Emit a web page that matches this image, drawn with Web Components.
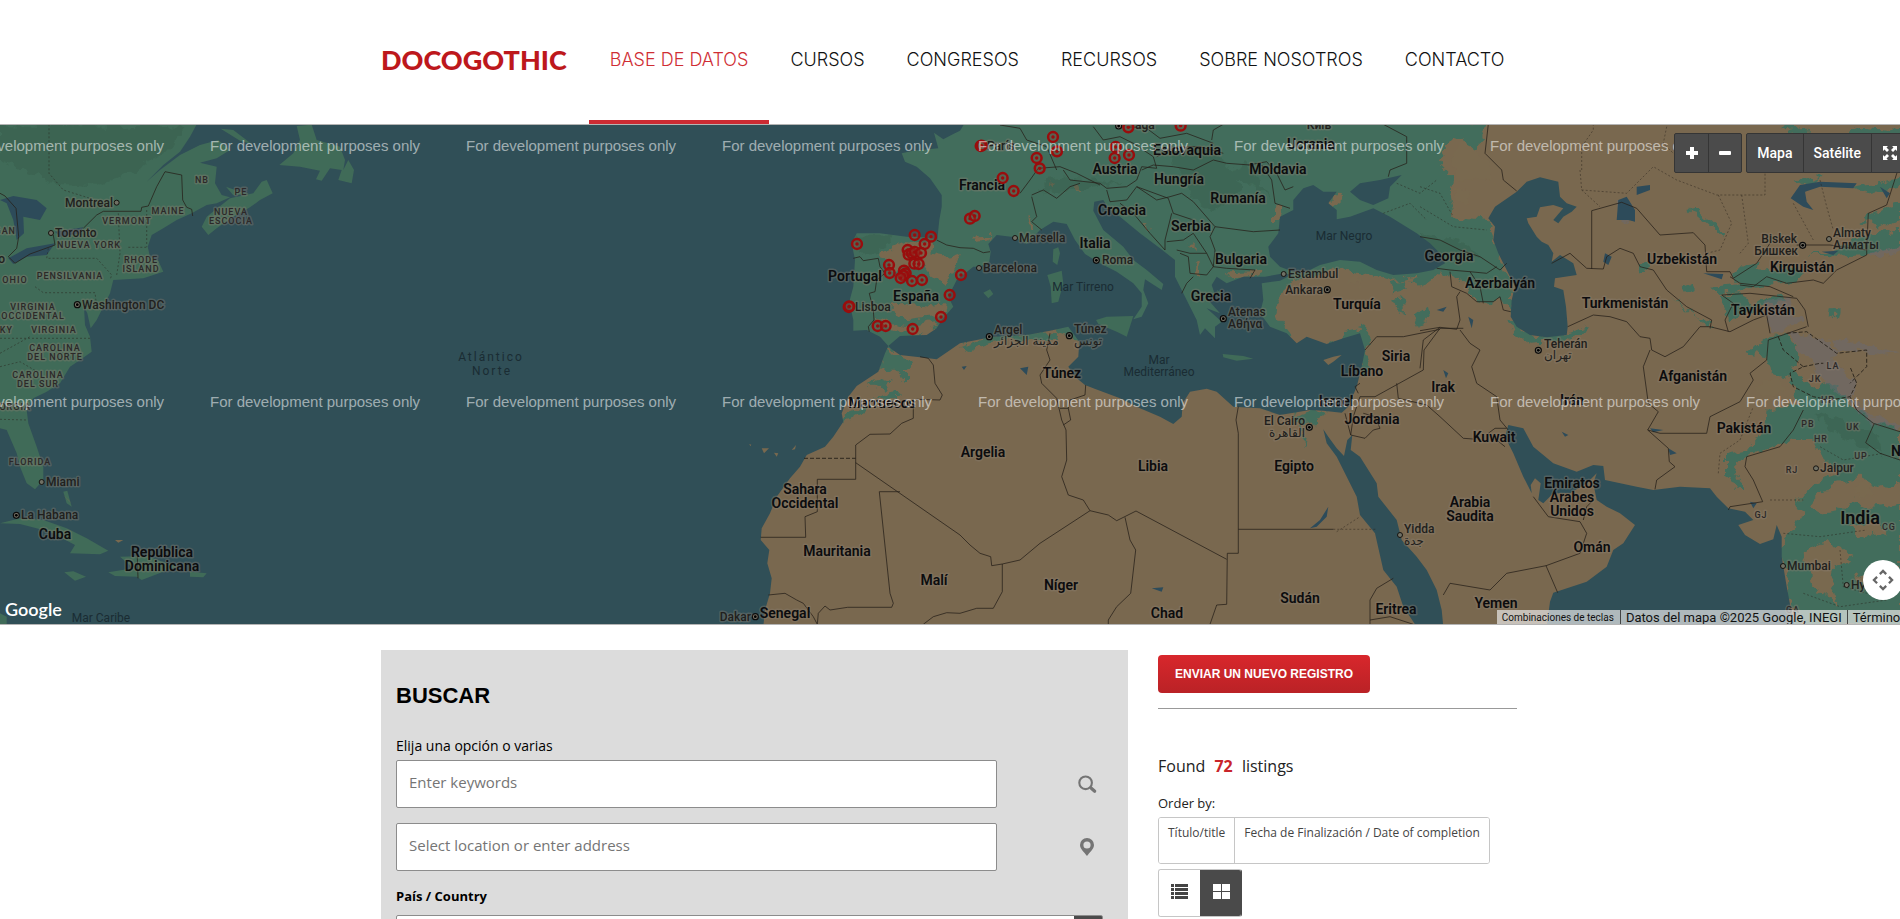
<!DOCTYPE html>
<html lang="es">
<head>
<meta charset="utf-8">
<title>Docogothic – Base de datos</title>
<style>
html, body { margin: 0; height: 100%; }
body { background: #fff; color: #222; font-family: "Open Sans", "Noto Sans", sans-serif; overflow: auto; scrollbar-width: none; }
dg-columns { margin-top: 25px; }
</style>
</head>
<body>
<dg-header>
  <dg-nav-item href="#datos" current>BASE DE DATOS</dg-nav-item>
  <dg-nav-item href="#cursos">CURSOS</dg-nav-item>
  <dg-nav-item href="#congresos">CONGRESOS</dg-nav-item>
  <dg-nav-item href="#recursos">RECURSOS</dg-nav-item>
  <dg-nav-item href="#nosotros">SOBRE NOSOTROS</dg-nav-item>
  <dg-nav-item href="#contacto">CONTACTO</dg-nav-item>
</dg-header>
<dg-map></dg-map>
<dg-columns>
  <dg-search slot="main"></dg-search>
  <dg-results slot="side"></dg-results>
</dg-columns>

<script>
const define = (name, html, setup) => {
  const template = document.createElement('template');
  template.innerHTML = html;
  customElements.define(name, class extends HTMLElement {
    constructor() {
      super();
      this.attachShadow({ mode: 'open' }).append(template.content.cloneNode(true));
    }
    connectedCallback() { if (setup) setup(this, this.shadowRoot); }
  });
};

define('dg-header', `
<style>
:host { display: block; background: #fff; }
.bar { display: flex; height: 124px; max-width: 1138px; margin: 0 auto; gap: 22px; }
.logo { display: flex; align-items: center; padding-bottom: 4px; color: #bd181c; font: 900 27px/32px Lato, sans-serif; text-decoration: none; }
nav { display: flex; }
</style>
<header class="bar"><a class="logo" href="#inicio">DOCOGOTHIC</a><nav><slot></slot></nav></header>`);

define('dg-nav-item', `
<style>
:host { display: flex; }
a { display: flex; align-items: center; padding: 0 21px; border-bottom: 4px solid transparent; color: #111; font: 300 18px/24px Inter, sans-serif; text-decoration: none; white-space: nowrap; }
:host([current]) a { color: #cf2e34; border-color: #cc2b33; }
</style>
<a><slot></slot></a>`, (el, root) => { root.querySelector('a').href = el.getAttribute('href'); });

define('dg-columns', `
<style>
:host { display: grid; grid-template-columns: minmax(0, 747fr) minmax(0, 359fr); gap: 30px; box-sizing: border-box; max-width: 1138px; padding-right: 2px; margin: 0 auto; }
</style>
<slot name="main"></slot><slot name="side"></slot>`);

define('dg-search', `
<style>
:host { display: block; background: #dcdcdc; padding: 31px 25px 30px 15px; color: #000; }
h2 { margin: 0 0 25px; font: 700 22px/30px "Liberation Sans", sans-serif; }
label { display: block; font-size: 14px; line-height: 20px; margin-bottom: 4px; }
label.strong { font-size: 13px; font-weight: 700; margin-bottom: 9px; }
.row { display: flex; justify-content: space-between; align-items: center; margin-bottom: 15px; }
input { box-sizing: border-box; width: 85%; height: 48px; padding: 0 12px 4px; border: 1px solid #8c8c8c; border-radius: 2px; background: #fff; font: 15px "Open Sans", sans-serif; }
input::placeholder { color: #757575; opacity: 1; }
.icon { width: 32px; height: 32px; padding: 0; border: 0; background: none; color: #757575; display: grid; place-items: center; }
.pick { display: flex; position: relative; }
select { appearance: none; width: 100%; height: 48px; padding: 0 40px 0 12px; border: 1px solid #8c8c8c; border-radius: 2px; background: linear-gradient(#4b4b4b, #4b4b4b) right / 28px 100% no-repeat #fff; font: 15px "Open Sans", sans-serif; }
</style>
<form>
  <h2>BUSCAR</h2>
  <label for="kw">Elija una opción o varias</label>
  <div class="row"><input id="kw" type="text" placeholder="Enter keywords">
    <button class="icon" type="button" aria-label="Buscar"><svg width="20" height="20" viewBox="0 0 20 20" fill="none" stroke="currentColor"><circle cx="8.600" cy="8.800" r="6.300" stroke-width="2.100"/><path d="M13.300 13.300l1 1" stroke-width="2"/><path d="M14.300 14.200l3.400 3" stroke-width="3.200" stroke-linecap="round"/></svg></button></div>
  <div class="row"><input id="loc" type="text" aria-label="Dirección" placeholder="Select location or enter address">
    <button class="icon" type="button" aria-label="Ubicación"><svg width="20" height="20" viewBox="0 0 20 20"><path fill="currentColor" fill-rule="evenodd" d="M10 1a7 7 0 0 0-7 7c0 4 4.500 7.500 7 11 2.500-3.500 7-7 7-11a7 7 0 0 0-7-7zm0 3.400a3.600 3.600 0 1 1 0 7.200 3.600 3.600 0 0 1 0-7.200z"/></svg></button></div>
  <label class="strong" for="country">País / Country</label>
  <div class="pick"><select id="country"><option></option></select></div>
</form>`);

define('dg-results', `
<style>
:host { display: block; padding-top: 5px; color: #222; }
.send { display: block; height: 38px; padding: 0 17px; border: 0; border-radius: 4px; background: linear-gradient(#d8272c, #ba2226); color: #fff; font: 700 12px "Liberation Sans", sans-serif; }
hr { border: 0; border-top: 1px solid #999; margin: 15px 0 45px; }
p { margin: 0; }
.found { font-size: 16px; line-height: 24px; margin-bottom: 15px; }
.found b { color: #c9252b; margin: 0 5px; }
.order { font-size: 13px; line-height: 20px; margin-bottom: 4px; }
.group { display: flex; width: max-content; margin-bottom: 5px; border: 1px solid #c6c6c6; border-radius: 3px; overflow: hidden; }
.group button { margin: 0; border: 0; background: #fff; color: #444; font: 12px/20px "Open Sans", sans-serif; height: 45px; padding: 5px 9px 20px; white-space: nowrap; }
.group button + button { border-left: 1px solid #c6c6c6; }
.views button { width: 41px; height: 46px; padding: 0 0 4px; display: grid; place-items: center; }
.views button + button { background: #4a4a4a; color: #fff; border-color: #4a4a4a; }
.views { border-right-color: #4a4a4a; }
</style>
<button class="send" type="button">ENVIAR UN NUEVO REGISTRO</button>
<hr>
<p class="found">Found <b>72</b> listings</p>
<p class="order">Order by:</p>
<div class="group"><button type="button">Título/title</button><button type="button">Fecha de Finalización / Date of completion</button></div>
<div class="group views">
  <button type="button" aria-label="Lista"><svg width="17" height="16" fill="currentColor"><path d="M0 1h3v3H0zM0 5h3v3H0zM0 9h3v3H0zM0 13h3v3H0zM4 1h13v3H4zM4 5h13v3H4zM4 9h13v3H4zM4 13h13v3H4z"/></svg></button>
  <button type="button" aria-label="Cuadrícula"><svg width="17" height="16" fill="currentColor"><path d="M0 1h8v7H0zM9 1h8v7H9zM0 9h8v7H0zM9 9h8v7H9z"/></svg></button>
</div>`);

/* ---- Map: survey sheets A–D, each a third of a pixel per unit, side by side ---- */
const SHEET = { A: 0, B: 480, C: 960, D: 1420 };
const place = (s, x, y) => [SHEET[s] + x / 3, 120 + y / 3];
function trace(text, close) {
  return text.split('|').map(part => {
    let sheet = 'A', first = true, d = '';
    for (const token of part.trim().split(/\s+/)) {
      if (SHEET[token] !== undefined) { sheet = token; continue; }
      const [x, y] = token.split(',').map(Number);
      const [px, py] = place(sheet, x, y);
      d += (first ? 'M' : 'L') + px.toFixed(1) + ' ' + py.toFixed(1);
      first = false;
    }
    return d + (close ? 'Z' : '');
  }).join('');
}
const GREEN = `B 1150,0 C 1440,0 D 205,10 190,60 150,100 120,50 90,60 60,130 100,170 90,230 100,290 205,300 215,340 235,400 270,480 275,575 240,530 200,555 170,550 150,500 100,470 60,460 20,490 0,500 C 1370,470 1300,480 1230,460 1180,455 1130,440 1060,470 1000,480 970,520 945,560 960,600 1000,650 940,700 500,720 300,635 B 1440,580 1240,690 1080,640 1080,300
| B 1215,685 1250,705 1290,720 1296,740 1260,745 1290,760 1290,785 1260,770 1240,750 1210,745 1180,760 1150,790 1200,740
| B 1160,800 1200,775 1235,790 1215,810 1185,800 | B 1095,885 1150,865 1160,875 1110,900 1085,905 | B 1190,830 1240,820 1265,835 1210,840
| C 0,680 60,655 200,635 300,640 290,660 200,660 100,665 30,690
| C 1100,675 1150,640 1215,625 1230,640 1215,690 1230,740 1205,770 1190,690
| C 1290,490 1330,480 1340,510 1300,520 | C 1300,540 1330,535 1335,580 1310,570 | C 1350,480 1400,475 1390,500 | C 1360,590 1400,560 1410,600 1370,620
| C 1000,885 1060,865 1095,885 1060,905 1030,915 1040,960 1030,990 1032,940
| D 262,590 300,630 350,655 440,640 500,615 480,645 430,662 330,668 280,640
| D 1180,860 1240,800 1300,860 1370,910 1440,930 1440,1090 1390,1110 1320,1070 1230,1090 1180,1150 1190,1180 1260,1170 1300,1140 1350,1160 1440,1150 1440,1513 1125,1513 1085,1300 1095,1250 1130,1210 1150,1180 1130,1150 1160,1110 1200,1080 1260,1060 1200,1000 1180,960 1120,960 1000,1000 950,1030 945,1055 975,1110 950,1110 915,1060 915,1000 1000,980 1030,930 1040,870 1100,860
| D 985,700 1040,650 1090,640 1140,690 1120,750 1180,800 1240,790 1290,850 1240,900 1140,870 1110,770 1050,760 1040,710
| D 900,525 950,520 1010,550 1060,520 1100,540 1000,570 930,600 | D 940,470 980,430 1020,420 1010,450 1130,440 1150,470 1080,490 1010,500 960,495
| D 1160,400 1250,390 1320,350 1440,330 1440,380 1340,405 1250,410 | D 1330,300 1400,260 1440,250 1440,300 1380,330 | D 1290,200 1370,190 1440,170 1440,200 1350,220 
| D 870,500 960,490 990,500 940,520 880,515 | D 800,270 830,265 870,300 920,345 905,350 850,300 815,285 | D 760,530 830,590 880,605 860,615 790,560 | D 785,500 810,490 820,510 795,520 | D 1235,565 1250,565 1245,600 1232,590
| D 650,430 690,430 680,450 660,450 | D 1080,20 1150,15 1180,50 1120,50 | D 1240,60 1330,20 1440,30 1440,90 1380,60 1300,75 | D 1120,190 1200,170 1160,210`;
const TAN = `B 1200,400 1280,360 1360,370 1350,400 1400,410 1420,440 1390,490 1360,480 1330,440 1250,450 1220,430 | B 1220,560 1300,550 1410,560 1370,590 1290,600 1230,580 | B 1190,590 1290,620 1380,600 1350,640 1280,640 1200,615 | B 1250,400 1330,390 1310,440 | B 1380,420 1440,400 1420,460 1390,495
| C 40,350 95,345 85,362 50,365 | C 330,205 350,190 370,215 345,215 | C 205,290 225,320 210,320 | C 945,265 970,260 965,300 945,300 | C 260,195 285,190 280,205 | C 550,310 575,325 560,325 | C 680,375 710,370 710,390 | C 705,430 715,430 720,470 708,465 | C 1105,250 1140,220 1150,235 1120,262 | C 800,460 920,455 900,470 810,475 | C 1180,460 1200,480 1190,500 1165,490
| D 90,100 130,60 170,90 210,140 220,190 190,170 150,190 110,170 | D 100,200 150,210 140,260 110,240 | D 1300,1100 1350,1090 1360,1120 1310,1130 | D 1150,1290 1220,1270 1300,1310 1240,1340 1230,1400 1260,1450 1190,1420 1170,1350 | D 1280,1220 1370,1200 1400,1240 1320,1250 | D 1300,1370 1400,1340 1440,1400 1350,1400
| D 1000,800 1080,770 1100,820 1040,830`;
const SEA = `A 0,0 B 1460,0 1440,32 1420,42 1390,58 1362,38 1375,85 1300,92 1265,100 1275,125 1310,140 1350,175 1385,225 1385,260 1378,300 1372,358 1335,352 1280,350 1200,340 1130,340 1115,370 1125,420 1120,500 1108,545 1120,600 1120,632 1160,630 1200,650 1225,678 1215,700 1195,755 1130,798 1105,830 1085,880 1090,905 1060,950 1035,980 980,1005 960,1040 930,1075 890,1130 870,1180 845,1225 842,1260 868,1290 862,1330 875,1375 870,1420 855,1470 850,1520 A 0,1520
| B 1225,678 1260,648 1340,645 1370,625 1385,600 1420,560 1405,530 1430,480 1480,440 C 60,440 88,425 92,395 85,372 110,345 165,352 200,372 240,330 280,305 320,312 345,360 375,402 420,430 470,455 520,490 545,520 545,560 520,598 545,590 565,550 550,510 555,478 605,510 610,492 560,450 520,420 490,380 430,330 400,272 403,245 430,240 445,265 480,290 540,340 600,385 645,420 645,470 670,520 690,560 710,600 720,645 735,625 765,655 765,620 785,605 740,565 780,580 745,540 765,525 755,495 770,470 800,490 850,470 915,470 960,462 1000,462 960,482 905,490 910,540 900,580 930,620 980,640 1010,670 1040,650 1100,672 1150,655 1200,640 1215,690 1205,740 1190,800 1165,860 1145,878 1090,872 1050,870 960,885 900,865 820,860 770,815 740,806 690,815 668,850 665,890 640,912 600,890 540,865 480,835 400,805 375,795 345,770 325,740 355,710 358,665 325,620 270,632 200,645 100,650 0,670 B 1370,718 1320,712 1260,705 1235,688
| C 930,410 925,380 955,340 960,290 1000,270 1000,240 1030,205 1060,195 1090,215 1130,215 1105,250 1130,270 1130,298 1170,290 1240,265 1290,290 1370,340 1410,370 1440,400 1455,430 1420,450 1370,460 1300,465 1250,450 1200,425 1140,420 1080,435 1030,460 1000,455 960,440
| C 1170,215 1200,190 1260,180 1325,165 1290,200 1285,235 1240,255 1200,240
| D 205,295 225,260 290,215 320,185 360,172 415,185 420,230 440,250 470,260 455,275 430,290 415,310 400,300 430,265 400,255 360,262 350,290 320,295 325,310 350,350 365,365 385,375 400,400 395,425 420,405 460,430 470,465 405,475 402,500 430,510 438,560 443,620 440,645 380,652 330,645 290,620 272,590 275,540 285,500 260,450 235,400 220,360 225,320
| D 255,950 265,915 310,925 340,980 400,1030 470,1055 520,1035 550,1038 555,1080 650,1100 700,1110 780,1100 870,1105 890,1130 925,1165 975,1175 1000,1200 955,1215 975,1245 1020,1272 1060,1258 1070,1215 1085,1250 1085,1310 1100,1400 1115,1480 1125,1520 380,1520 390,1445 400,1418 500,1385 560,1340 580,1290 610,1270 645,1215 600,1180 560,1160 530,1140 520,1090 530,1060 500,1090 450,1120 400,1120 370,1150 355,1140 362,1090 345,1075 332,1095 335,1120 310,1070 280,1000
| C 1090,928 1105,950 1130,985 1152,1008 1162,960 1177,945 1172,990 1200,1010 1250,1090 1255,1130 1310,1200 1325,1260 1370,1310 1400,1350 1430,1410 1445,1470 1450,1520 1420,1520 1365,1513 1330,1460 1310,1400 1270,1350 1245,1240 1200,1185 1190,1130 1130,1010 1100,970`;
const LAKES = `A 0,240 40,228 110,240 140,265 120,300 70,290 72,340 50,360 40,300 20,250 | A 25,415 80,385 165,370 140,405 80,410 40,432 | A 165,335 250,322 240,340 180,350
| D 590,300 595,240 620,230 645,270 645,305 625,300 | D 650,200 690,195 690,210 650,225 | D 1112,235 1140,195 1200,185 1310,190 1300,205 1200,200 1155,215 1160,245 1180,270 1150,260 | D 850,460 910,462 905,478 | D 1380,200 1410,220 1400,235 | D 555,400 575,410 565,435 550,425 | D 50,570 80,560 70,575 | D 145,590 160,600 155,625 | D 1205,395 1255,392 1240,405 | D 690,925 730,930 700,937 | D 425,935 445,945 435,950 | D 745,985 770,1000 750,1005 | D 70,750 85,760 78,775 | D 990,1145 1010,1150 1000,1165
| C 1050,1225 1080,1200 1105,1160 1100,1190 1070,1220 | C 575,1405 610,1402 605,1415 | C 180,745 205,740 200,765 | C 5,740 20,738 12,750`;
const ISLANDS = `A 0,0 590,13 570,50 540,95 490,135 440,185 480,150 540,105 600,75 655,60 690,90 650,115 600,128 650,140 645,190 665,225 690,232 650,250 620,255 575,280 530,300 490,325 455,345 443,380 450,410 475,422 490,455 430,475 340,480 330,520 310,560 290,600 272,625 262,580 252,560 255,615 270,650 275,695 240,720 210,740 180,790 140,815 100,835 80,870 85,910 110,980 130,1040 130,1080 105,1108 80,1090 60,1040 50,1000 20,930 0,925
| A 605,320 620,290 690,235 760,220 785,185 800,180 818,220 780,240 750,262 700,290 650,325 625,345 | A 678,200 720,215 748,222 700,226 | A 838,135 880,100 900,60 890,18 935,14 950,60 1020,80 1035,120 1030,150 1045,120 1062,150 1055,190 1015,180 1025,150 990,145 965,182 948,178 960,152 900,140 | A 662,26 700,30 755,72 720,62
| A 0,1210 60,1195 130,1200 200,1225 260,1255 325,1292 300,1303 210,1300 225,1275 150,1235 60,1212 | A 325,1357 400,1345 360,1310 440,1308 530,1340 490,1355 425,1380 410,1370 345,1368 | A 570,1355 620,1360 610,1372 570,1370 | A 193,1357 220,1354 258,1370 225,1382 | A 190,1115 202,1112 215,1160 200,1150 | A 0,1480 20,1490 20,1513 0,1513
| C 280,388 295,382 300,400 292,435 278,425 | C 262,465 305,452 310,490 295,545 275,550 272,500 | C 408,600 440,590 520,588 500,650 470,635 415,612 | C 788,702 850,708 880,716 830,722 790,712 | C 70,518 90,508 100,522 85,535 | C 770,510 785,518 778,528`;
const SAND = `B 845,985 867,985 852,1000 | B 882,998 895,1000 890,1010 | B 935,990 948,975 945,988 | A 345,1260 370,1260 355,1268 | A 190,1125 214,1150 206,1140 | C 1090,720 1120,710 1145,705 1120,725 1105,735 | B 808,972 814,974 811,979`;
const SNOW = `D 600,250 612,235 622,300 605,308 | D 1040,540 1110,530 1120,580 1150,600 1060,640 1045,610 | D 1100,640 1170,640 1260,690 1240,720 1310,790 1290,850 1230,800 1180,740 | D 1290,830 1340,880 1440,920 1400,925 1320,890 | D 1340,400 1440,380 1440,395 1350,415 | D 1230,660 1300,670 1440,700 1380,705 1260,690`;
const SHADE = `A 0,13 560,20 480,110 300,200 160,190 0,120 | C 620,80 760,90 850,200 760,280 700,230 | B 1130,350 1240,350 1200,400 1130,400 | C 260,180 330,170 480,190 330,215 250,210 | C 700,180 860,130 930,240 860,180 | D 0,340 130,370 200,420 120,410 0,370 | D 1190,880 1360,930 1390,1000 1250,950`;
const BORDERS = `A 250,325 290,285 310,274 423,274 425,262 445,258 470,200 495,155 545,165 548,240 560,262 575,268 578,288 | A 0,220 15,228 48,265 56,350 50,385 25,410 45,430 90,402 165,375 160,345 | A 412,1310 414,1375
| B 1120,415 1140,410 1150,422 1195,415 1200,440 1215,460 1190,480 1185,515 1168,520 1180,570 1182,600 1165,620 1168,635 | B 1370,360 1400,375 1440,383 C 40,385 70,398 90,395
| B 1320,710 1345,715 1360,735 1365,790 1387,825 1380,840 1310,838 1300,855 1300,895 1265,910 1230,942 1170,943 1127,975 1127,1078 1012,1078 1012,1175 975,1190 977,1252 842,1252 | B 1127,1028 1440,1245 C 30,1275 60,1300 92,1310 95,1337 127,1332 180,1320 240,1270 390,1172 445,1185 470,1202 528,1173 800,1318 | B 1260,1115 1198,1115 1230,1420 1240,1450 1235,1462 1103,1462 1050,1470 1035,1458 1015,1480 1012,1513 | B 865,1425 915,1420 950,1440 970,1450 1000,1490 1012,1513 | B 1330,1513 1360,1490 1400,1478 1440,1480 C 50,1465 100,1465 127,1415 127,1332
| C 270,640 260,690 270,720 240,765 245,790 290,835 305,900 318,930 320,1020 305,1070 325,1125 370,1140 390,1172 | C 300,865 325,865 332,900 310,915 | C 377,795 375,825 330,840 325,865 | C 495,1192 510,1260 527,1290 512,1420 470,1460 445,1500 445,1513 | C 835,860 828,900 835,940 835,1300 802,1300 800,1453 770,1455 750,1513 | C 835,1228 1120,1228 | C 1155,880 1172,945 1180,890 1200,830 1245,830 1390,750 1392,690 1440,625 D 130,625 | C 1172,945 1215,955 1240,930 1260,925 1245,890 1210,880 | C 1195,820 1185,800 1200,790 | C 1310,790 1315,835 1400,855 1440,890 D 130,955 160,957 | C 1215,690 1250,650 1330,650 1440,628
| C 1230,1513 1230,1440 1250,1405 1300,1375 | C 1230,1500 1290,1490 1360,1513
| C 120,15 180,25 200,60 260,80 290,150 | C 180,220 210,180 235,145 300,140 350,160 420,195 | C 215,225 250,210 290,235 330,200 360,190 | C 215,230 230,290 215,305 245,330 | C 310,150 330,180 420,190 440,205 500,200 530,180 545,140 590,145 580,110 520,70 480,50 430,60 400,20 | C 545,150 580,135 640,140 700,150 760,120 800,130 870,135 | C 440,210 450,245 500,240 530,200 625,235 640,280 700,300 | C 480,250 520,280 570,340 615,390 615,360 635,280 | C 530,200 590,240 630,230 665,220 700,245 765,320 880,335 960,330 | C 765,320 750,350 765,390 760,440 800,445 885,450 870,475 | C 650,390 690,400 740,400 760,440 740,465 690,460 685,410 660,400 | C 620,365 670,360 700,340 740,400 | C 665,520 680,490 700,470 | C 865,135 920,125 950,160 975,210 1000,200 | C 905,135 935,180 945,250 990,265 | C 500,20 560,25 600,55 680,40 760,70 | C 755,60 760,30 790,13 | C 590,110 650,80 720,80 790,100 | C 1270,13 1340,50 1340,130 1290,150 1285,170
| D 205,13 195,100 245,150 250,180 290,213 | D 0,350 60,360 120,390 180,410 240,450 260,430 | D 50,445 90,450 150,455 200,460 230,440 | D 90,455 95,500 140,520 170,545 220,545 240,530 250,570 272,575 | D 150,455 180,500 190,550 | D 0,632 60,622 110,628 120,600 110,530 120,515 | D 120,630 150,670 180,690 155,740 170,790 230,830 240,900 265,930 | D 60,622 10,660 0,745 | D 205,940 225,925 260,925 | D 230,960 255,980
| D 515,447 515,272 605,247 650,265 720,345 820,338 855,375 860,455 930,455 940,475 1010,430 1050,370 | D 395,430 450,400 500,445 550,447 560,410 600,385 640,400 660,440 700,450 740,510 800,560 875,600 870,625 | D 443,620 520,585 570,590 620,605 660,650 690,655 695,690 735,710 790,680 840,620 870,620 930,635 1000,600 1040,585 1050,640 | D 690,690 670,740 685,850 715,875 683,930 745,985 748,1025 765,1040 710,1080 705,1108 | D 683,930 720,940 860,940 870,890 960,845 1000,780 990,760 1040,720 1045,660 1160,620 | D 905,525 990,520 1130,535 1155,570 1165,620 | D 905,525 940,550 915,600 925,635 | D 930,470 960,490 1050,500 1120,530 | D 960,495 1000,500 1040,470 1100,490 1180,480 1210,490 1250,450 1340,405 1340,375 | D 1130,375 1230,375 1340,390 1345,280 1400,255 1440,130 | D 1150,870 1120,930 1080,980 980,1010 975,1040 1000,1080 1028,1145 930,1160 925,1170 | D 1290,830 1310,870 1360,910 1440,935 | D 1362,912 1337,968 1380,1000 1440,1020 | D 385,1190 480,1205 500,1240 480,1300 378,1337 413,1418 | D 378,1337 260,1360 210,1410 90,1390 70,1425 | D 340,1130 385,1190 | D 490,1200 500,1160 520,1140`;
const DOTTED = `A 147,13 147,160 190,210 270,235 | A 145,385 140,415 290,415 335,465 330,480 | A 105,500 130,518 285,518 290,560 | A 355,280 360,400 350,465 | A 385,382 445,382 | A 440,270 440,380 | A 0,655 270,655 | A 0,700 90,650 | A 0,740 60,725 120,760 | A 0,898 80,900 | C 1120,1228 1250,1228 | C 1130,1235 1200,1190 | D 485,150 485,80 520,30 520,13 | D 480,150 485,210 540,260 | D 485,210 620,220 700,140 770,180 890,225 1035,225 1035,150 | D 740,20 730,70 800,140 | D 895,225 935,310 900,390 860,400 | D 965,225 985,370 960,400 | D 1120,250 1180,360 | D 1200,180 1220,260 1240,330 | D 960,960 1000,860 | D 895,1060 900,1000 960,960 | D 1050,1140 1150,1140 | D 1090,1240 1200,1250 1340,1230 | D 1200,980 1270,1020 1390,1000 | D 1260,1290 1270,1400 1340,1420 | D 1150,1420 1260,1460 1400,1440 | C 1270,280 1350,250 1400,300 | C 1310,190 1380,220 1430,180 | D 0,200 60,220 100,290 | D 0,260 100,320 200,330`;
const DASHED = `B 972,1015 1127,1015 | D 1075,650 1090,690 1150,740 1110,760 1120,800 1180,830 1230,840 1290,830 1310,790 1290,740 | D 1100,640 1160,635 1250,700 1340,690 1340,740 1290,790 | D 1150,740 1200,730 1210,730`;

/* sheet, x, baseline, text, kind, anchor (middle by default, s: start, e: end) */
const LABELS = [
['A',605,190,'NB','st'],['A',724,226,'PE','st'],['A',504,283,'MAINE','st'],['A',380,312,'VERMONT','st'],['A',694,285,'NUEVA','st'],['A',694,312,'ESCOCIA','st'],['A',48,343,'MICHIGAN','st','e'],['A',268,384,'NUEVA YORK','st'],['A',422,430,'RHODE','st'],['A',422,457,'ISLAND','st'],['A',210,478,'PENSILVANIA','st'],['A',45,490,'OHIO','st'],['A',98,571,'VIRGINIA','st'],['A',100,598,'OCCIDENTAL','st'],['A',40,640,'KENTUCKY','st','e'],['A',162,640,'VIRGINIA','st'],['A',166,694,'CAROLINA','st'],['A',166,721,'DEL NORTE','st'],['A',114,775,'CAROLINA','st'],['A',114,802,'DEL SUR','st'],['A',93,870,'GEORGIA','st','e'],['A',89,1036,'FLORIDA','st'],
['A',340,262,'Montreal','ci','e'],['A',166,352,'Toronto','ci','s'],['A',14,430,'Chicago','ci','e'],['A',247,567,'Washington DC','ci','s'],['A',139,1098,'Miami','ci','s'],['A',64,1197,'La Habana','ci','s'],
['A',166,1257,'Cuba','co'],['A',487,1311,'República','co'],['A',487,1353,'Dominicana','co'],['A',303,1507,'Mar Caribe','se'],
['A',1472,723,'Atlántico','oc'],['A',1476,765,'Norte','oc'],
['B',1124,483,'Portugal','co'],['B',1308,543,'España','co'],['B',1126,574,'Lisboa','ci','s'],['B',1205,865,'Marruecos','co'],['B',974,1122,'Sahara','co'],['B',974,1164,'Occidental','co'],['B',1070,1308,'Mauritania','co'],['B',1362,1395,'Malí','co'],['B',812,1503,'Dakar','ci','e'],['B',916,1494,'Senegal','co'],
['C',67,209,'Francia','co'],['C',80,90,'París','ci','s'],['C',525,28,'aga','ci','s'],['C',1076,27,'Київ','ci'],['C',682,105,'Eslovaquia','co'],['C',1052,86,'Ucrania','co'],['C',464,162,'Austria','co'],['C',656,192,'Hungría','co'],['C',953,162,'Moldavia','co'],['C',833,249,'Rumanía','co'],['C',486,285,'Croacia','co'],['C',693,333,'Serbia','co'],['C',178,366,'Marsella','ci','s'],['C',406,384,'Italia','co'],['C',425,432,'Roma','ci','s'],['C',843,431,'Bulgaria','co'],['C',1151,361,'Mar Negro','se'],['C',70,456,'Barcelona','ci','s'],['C',370,514,'Mar Tirreno','se'],['C',985,474,'Estambul','ci','s'],['C',1089,522,'Ankara','ci','e'],['C',754,542,'Grecia','co'],['C',1191,567,'Turquía','co'],['C',805,588,'Atenas','ci','s'],['C',805,623,'Αθήνα','ci','s'],['C',103,641,'Argel','ci','s'],['C',103,675,'مدينة الجزائر','ar','s'],['C',342,640,'Túnez','ci','s'],['C',342,675,'تونس','ar','s'],['C',598,733,'Mar','se'],['C',598,767,'Mediterráneo','se'],['C',307,774,'Túnez','co'],['C',1308,723,'Siria','co'],['C',1206,768,'Líbano','co'],['C',1127,858,'Israel','co'],['C',1237,912,'Jordania','co'],['C',1034,915,'El Cairo','ci','e'],['C',1034,950,'القاهرة','ar','e'],['C',70,1011,'Argelia','co'],['C',580,1053,'Libia','co'],['C',1002,1053,'Egipto','co'],['C',303,1410,'Níger','co'],['C',621,1494,'Chad','co'],['C',1019,1449,'Sudán','co'],['C',1307,1482,'Eritrea','co'],['C',1333,1239,'Yidda','ci','s'],['C',1333,1275,'جدة','ar','s'],
['D',88,423,'Georgia','co'],['D',241,504,'Azerbaiyán','co'],['D',786,431,'Uzbekistán','co'],['D',1131,369,'Biskek','ci','e'],['D',1135,404,'Бишкек','ci','e'],['D',1240,352,'Almaty','ci','s'],['D',1240,387,'Алматы','ci','s'],['D',1146,456,'Kirguistán','co'],['D',616,564,'Turkmenistán','co'],['D',1028,585,'Tayikistán','co'],['D',372,684,'Teherán','ci','s'],['D',372,718,'تهران','ar','s'],['D',820,783,'Afganistán','co'],['D',69,816,'Irak','co'],['D',456,854,'Irán','co'],['D',971,939,'Pakistán','co'],['D',221,965,'Kuwait','co'],['D',1200,1056,'Jaipur','ci','s'],['D',456,1104,'Emiratos','co'],['D',456,1146,'Árabes','co'],['D',456,1188,'Unidos','co'],['D',149,1161,'Arabia','co'],['D',149,1203,'Saudita','co'],['D',517,1296,'Omán','co'],['D',1320,1212,'India','big'],['D',1101,1350,'Mumbai','ci','s'],['D',1294,1407,'Hyderabad','ci','s'],['D',227,1464,'Yemen','co'],['D',1413,1008,'Nepal','co','s'],
['D',1239,748,'LA','in'],['D',1185,786,'JK','in'],['D',1225,848,'HP','in'],['D',1165,922,'PB','in'],['D',1300,930,'UK','in'],['D',1202,966,'HR','in'],['D',1323,1017,'UP','in'],['D',1115,1059,'RJ','in'],['D',1023,1194,'GJ','in'],['D',1406,1230,'CG','in'],['D',1119,1480,'GA','in']];
const TOWNS = 'A 350,248 153,339 125,1086 C 165,354 57,444 971,462 1320,1245 D 1227,357 1089,1338 1280,1395 1188,1045';
const CAPITALS = 'A 232,554 49,1186 B 826,1490 C 409,421 790,596 88,650 328,647 1102,509 1048,922 476,18 D 1148,376 355,691';
const RECORDS = 'B 1131,372 1304,345 1353,350 1334,372 1283,390 1286,404 1296,400 1304,396 1323,399 1303,431 1316,432 1227,435 1229,459 1272,452 1277,460 1270,466 1262,474 1296,483 1326,480 1409,525 1106,561 1108,559 1383,591 1193,618 1217,618 1298,627 1443,465 C 62,78 65,77 279,51 291,94 230,114 239,145 128,174 161,213 30,296 44,288 467,81 464,114 507,105 505,22 662,17';
function points(text) {
  const out = []; let s;
  for (const t of text.split(' ')) SHEET[t] !== undefined ? s = t : out.push(place(s, ...t.split(',').map(Number)));
  return out;
}

define('dg-map', `
<style>
:host { display: block; position: relative; height: 499px; overflow: hidden; border: solid #b4b4b4; border-width: 1px 0; background: #304f57; font-family: Roboto, sans-serif; }
.chart { display: block; width: 100%; height: 100%; }
text { font-family: Roboto, "Noto Sans", sans-serif; paint-order: stroke; stroke: #8d8072; stroke-opacity: .35; stroke-width: 3px; stroke-linejoin: round; fill: #211f1d; font-size: 12px; text-anchor: middle; }
.co { font-size: 14px; font-weight: 600; fill: #0c0c0e; }
.big { font-size: 18px; font-weight: 600; fill: #0c0c0e; }
.ci { font-size: 12px; font-weight: 500; }
.ar { font-size: 12px; font-family: "DejaVu Sans", sans-serif; }
.st, .in { font-size: 9px; font-weight: 500; letter-spacing: 1px; fill: #2c2828; }
.se { fill: #1a2c33; stroke: none; }
.oc { fill: #1a2c33; stroke: none; letter-spacing: 2px; }
.wm { font: 15px "Liberation Sans", sans-serif; fill: #fff; fill-opacity: .55; stroke: none; text-anchor: start; }
.s { text-anchor: start; } .e { text-anchor: end; }
.google { position: absolute; left: 5px; bottom: 4px; color: #fff; font: 600 18px/22px Lato, sans-serif; text-decoration: none; }
.tools { position: absolute; top: 8px; right: -9px; display: flex; gap: 4px; }
.set { display: flex; border: 1px solid #353535; border-radius: 2px; background: #4b4b4b; }
.set button { display: grid; place-items: center; height: 38px; min-width: 33px; margin: 0; padding: 0 10px; border: 0; background: none; color: #fff; font: 500 14px Roboto, sans-serif; }
.set:last-child button:last-child { min-width: 37px; }
.set button + button { border-left: 1px solid #353535; }
.pan { position: absolute; right: -3px; bottom: 24px; width: 40px; height: 40px; padding: 0; border: 0; border-radius: 50%; background: #fff; display: grid; place-items: center; }
.credits { position: absolute; right: -12px; bottom: 0; display: flex; height: 14px; font-size: 13px; line-height: 15px; color: #111; background: rgba(236, 236, 236, .68); white-space: nowrap; }
.credits > * { padding: 0 5px; border: 0; border-left: 1px solid #444; color: inherit; text-decoration: none; }
.credits button { margin: 0; border: 0; background: none; font: 10px/15px Roboto, sans-serif; padding: 0 6px 0 5px; }
</style>
<svg class="chart" viewBox="0 125 1900 499" preserveAspectRatio="xMidYMid slice" role="img" aria-label="Mapa"></svg>
<a class="google" href="#google">Google</a>
<div class="tools">
  <div class="set"><button type="button" aria-label="Acercar"><svg width="12" height="12" fill="#fff"><path d="M4 0h4v4h4v4H8v4H4V8H0V4h4z"/></svg></button><button type="button" aria-label="Alejar"><svg width="12" height="12" fill="#fff"><rect y="4" width="12" height="4" rx="1"/></svg></button></div>
  <div class="set"><button type="button">Mapa</button><button type="button">Satélite</button><button type="button" aria-label="Pantalla completa"><svg width="14" height="14" viewBox="0 0 14 14" fill="#fff"><path id="q" d="M0 0h5L3.500 1.500 6 4 4 6 1.500 3.500 0 5z"/><use href="#q" transform="matrix(-1 0 0 1 14 0)"/><use href="#q" transform="matrix(1 0 0 -1 0 14)"/><use href="#q" transform="matrix(-1 0 0 -1 14 14)"/></svg></button></div>
</div>
<button class="pan" type="button" aria-label="Controles de cámara"><svg width="22" height="22" viewBox="0 0 22 22" fill="none" stroke="#666" stroke-width="2.500"><path d="M7.500 4.500L11 1l3.500 3.500M7.500 17.500L11 21l3.500-3.500M4.500 7.500L1 11l3.500 3.500M17.500 7.500L21 11l-3.500 3.500" transform="translate(1 1) scale(.910)"/></svg></button>
<div class="credits"><button type="button">Combinaciones de teclas</button><span>Datos del mapa ©2025 Google, INEGI</span><a href="#terminos">Términos</a></div>`,
(el, root) => {
  const area = (text, fill, extra = '') => `<path d="${trace(text, true)}" fill="${fill}" ${extra}/>`;
  const line = (text, extra) => `<path d="${trace(text)}" fill="none" stroke="#262019" stroke-width=".9" stroke-linejoin="round" ${extra}/>`;
  let s = '<defs><filter id="rough" x="0" y="0" width="1" height="1"><feTurbulence type="fractalNoise" baseFrequency=".09" numOctaves="3" seed="4"/><feDisplacementMap in="SourceGraphic" scale="14" xChannelSelector="R" yChannelSelector="G"/></filter></defs>';
  s += '<rect y="120" width="1900" height="510" fill="#79684f"/>';
  s += `<g filter="url(#rough)"><rect y="110" width="1900" height="530" fill="none"/>${area(GREEN, '#426d5b')}${area(TAN, '#79694f')}${area(SNOW, '#6a6a70', 'opacity=".5"')}${area(SHADE, '#385d4b', 'opacity=".4"')}</g>`;
  s += area(SEA, '#304f57') + area(ISLANDS, '#406b58') + area(SHADE.split('|')[0], '#385d4b', 'opacity=".45" filter="url(#rough)"') + area(LAKES, '#2d4b5a') + area(SAND, '#79694f');
  s += line(BORDERS, 'opacity=".85"') + line(DOTTED, 'opacity=".5" stroke-dasharray="2 2"') + line(DASHED, 'stroke-dasharray="4 2"');
  for (const [x, y] of points(TOWNS)) s += `<circle cx="${x}" cy="${y}" r="2.500" fill="#6f7064" stroke="#16130f"/>`;
  for (const [x, y] of points(CAPITALS)) s += `<circle cx="${x}" cy="${y}" r="3" fill="#7c776b" stroke="#0c0c0c" stroke-width="1.200"/><circle cx="${x}" cy="${y}" r="1.400"/>`;
  for (const [sheet, lx, ly, word, kind, anchor] of LABELS) {
    const [x, y] = place(sheet, lx, ly).map(Math.round);
    s += `<text class="${kind} ${anchor || ''}" x="${x}" y="${y}">${word}</text>`;
  }
  for (const [x, y] of points(RECORDS)) s += `<circle cx="${x}" cy="${y}" r="4.900" fill="#8a4a38" fill-opacity=".3" stroke="#990d0d" stroke-width="2.500"/><circle cx="${x}" cy="${y}" r="1.700" fill="#990d0d"/>`;
  for (const y of [151, 407]) for (let x = -46; x < 1900; x += 256) {
    if (y === 151 && x > 1700) continue;
    s += `<text class="wm" x="${x}" y="${y}">For development purposes only</text>`;
  }
  root.querySelector('.chart').innerHTML = s;
});
</script>
</body>
</html>
